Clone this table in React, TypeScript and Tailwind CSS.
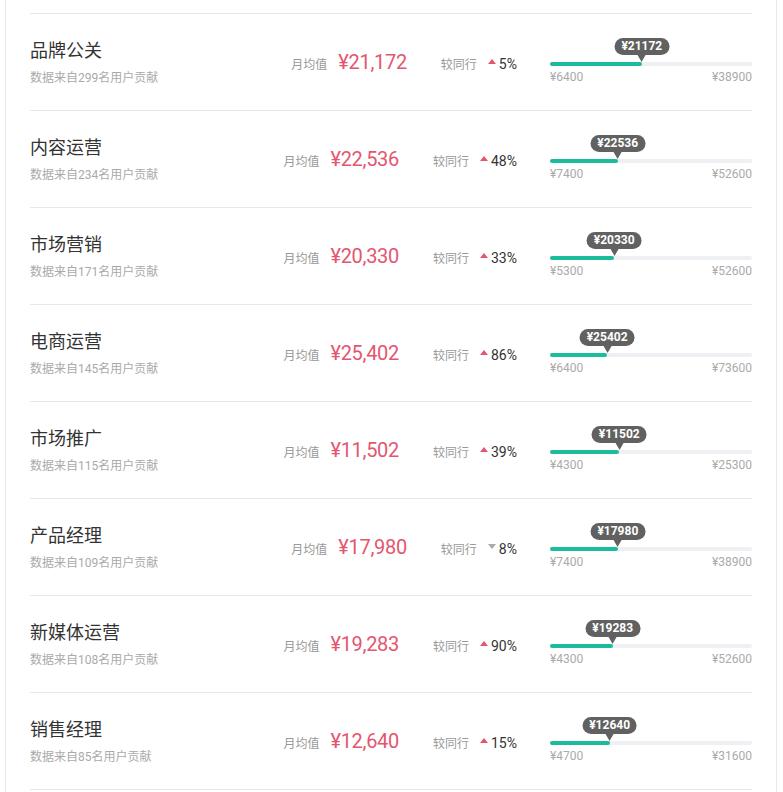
import React from "react";

type Row = {
  title: string;
  count: number;
  value: number;
  pct: number;
  up: boolean;
  min: number;
  max: number;
};

const rows: Row[] = [
  { title: "品牌公关", count: 299, value: 21172, pct: 5, up: true, min: 6400, max: 38900 },
  { title: "内容运营", count: 234, value: 22536, pct: 48, up: true, min: 7400, max: 52600 },
  { title: "市场营销", count: 171, value: 20330, pct: 33, up: true, min: 5300, max: 52600 },
  { title: "电商运营", count: 145, value: 25402, pct: 86, up: true, min: 6400, max: 73600 },
  { title: "市场推广", count: 115, value: 11502, pct: 39, up: true, min: 4300, max: 25300 },
  { title: "产品经理", count: 109, value: 17980, pct: 8, up: false, min: 7400, max: 38900 },
  { title: "新媒体运营", count: 108, value: 19283, pct: 90, up: true, min: 4300, max: 52600 },
  { title: "销售经理", count: 85, value: 12640, pct: 15, up: true, min: 4700, max: 31600 },
];

function SalaryRow({ r }: { r: Row }) {
  const p = ((r.value - r.min) / (r.max - r.min)) * 100;
  return (
    <div className="flex h-[97px] items-center border-b border-[#e8e8e8]">
      <div className="flex-1 min-w-0">
        <div className="text-[18px] leading-[24px] text-[#333]">{r.title}</div>
        <div className="mt-[7px] text-[12px] leading-[16px] text-[#aaa]">
          数据来自{r.count}名用户贡献
        </div>
      </div>
      <div className="flex items-baseline">
        <span className="mr-[11px] text-[12px] text-[#999]">月均值</span>
        <span className="text-[20px] leading-[28px] tracking-[-0.3px] text-[#e4566f]">
          ¥{r.value.toLocaleString("en-US")}
        </span>
        <span className="ml-[34px] text-[12px] text-[#999]">较同行</span>
        <span className="ml-[11px] text-[14px] text-[#333]">
          {r.up ? (
            <span className="mr-[3px] inline-block h-0 w-0 border-x-[4px] border-b-[5px] border-x-transparent border-b-[#e4566f] align-[5px]" />
          ) : (
            <span className="mr-[3px] inline-block h-0 w-0 border-x-[4px] border-t-[5px] border-x-transparent border-t-[#aaa] align-[5px]" />
          )}
          {r.pct}%
        </span>
      </div>
      <div className="mb-[2px] ml-[33px] w-[202px] pt-[24px]">
        <div className="relative h-[4px] rounded-full bg-[#eef0f3]">
          <div
            className="h-full rounded-full bg-[#1bbc9b]"
            style={{ width: `${p}%` }}
          />
          <div
            className="absolute bottom-full flex -translate-x-1/2 flex-col items-center"
            style={{ left: `${p}%` }}
          >
            <div className="h-[17px] whitespace-nowrap rounded-full bg-[#616161] px-[7px] text-[12px] font-bold leading-[17px] text-white">
              ¥{r.value}
            </div>
            <div className="h-0 w-0 border-x-[4px] border-t-[7px] border-x-transparent border-t-[#616161]" />
          </div>
        </div>
        <div className="mt-[3px] flex justify-between text-[12px] leading-[16px] text-[#aaa]">
          <span>¥{r.min}</span>
          <span>¥{r.max}</span>
        </div>
      </div>
    </div>
  );
}

export default function App() {
  return (
    <div className="min-h-[792px] w-[783px] bg-white font-[Roboto,'Noto_Sans_CJK_SC',sans-serif]">
      <div className="ml-[5px] min-h-[792px] w-[772px] border-x border-[#e8e8e8] pl-[24px] pr-[24px] pt-[13px]">
        <div className="border-t border-[#e8e8e8]">
          {rows.map((r) => (
            <SalaryRow key={r.title} r={r} />
          ))}
        </div>
      </div>
    </div>
  );
}
